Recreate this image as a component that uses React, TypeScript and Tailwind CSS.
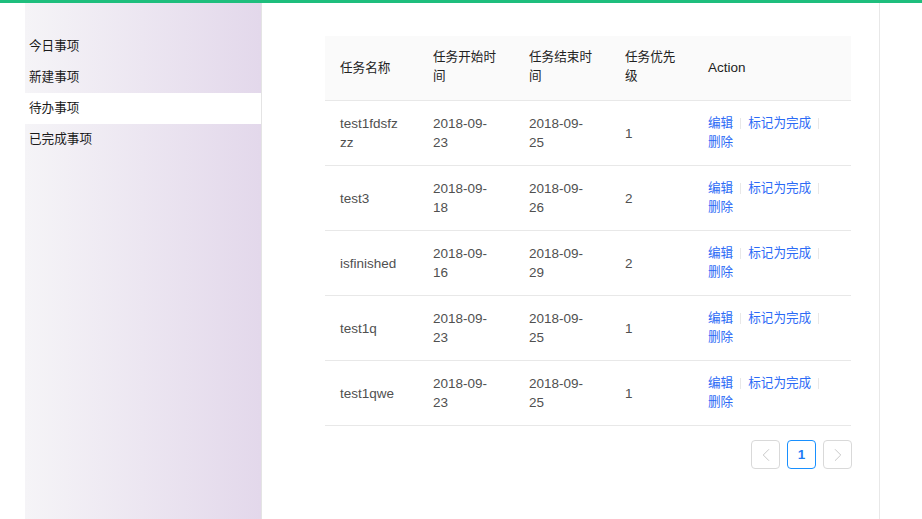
import React from 'react'
import { ChevronLeft, ChevronRight } from 'lucide-react'

const tasks = [
  { name: 'test1fdsfzzz', start: '2018-09-23', end: '2018-09-25', priority: 1 },
  { name: 'test3', start: '2018-09-18', end: '2018-09-26', priority: 2 },
  { name: 'isfinished', start: '2018-09-16', end: '2018-09-29', priority: 2 },
  { name: 'test1q', start: '2018-09-23', end: '2018-09-25', priority: 1 },
  { name: 'test1qwe', start: '2018-09-23', end: '2018-09-25', priority: 1 },
]

const menu = ['今日事项', '新建事项', '待办事项', '已完成事项']

function Divider() {
  return <span className="mx-[7px] inline-block h-[11px] w-px bg-[#e8e8e8] align-middle" />
}

export default function App() {
  return (
    <div className="min-h-screen bg-white font-['Liberation_Sans','Noto_Sans_CJK_SC',sans-serif] text-[13.5px] leading-[19px]">
      <div className="h-[3px] bg-[#1ebe7d]" />
      <div className="flex h-[516px]">
        {/* Sidebar */}
        <aside className="ml-[25px] w-[237px] border-r border-[#e4e4e4] bg-gradient-to-r from-[#f5f4f7] to-[#e3d8eb] pt-[28px]">
          {menu.map((item, i) => (
            <div
              key={item}
              className={`flex h-[31px] items-center pl-[4px] text-[12.6px] text-[#1a1a1a] ${i === 2 ? 'bg-white' : ''}`}
            >
              {item}
            </div>
          ))}
        </aside>

        {/* Main content */}
        <main className="w-[618px] border-r border-[#e8e8e8] pl-[63px] pr-[28px] pt-[33px]">
          <table className="w-full table-fixed border-collapse text-left">
            <colgroup>
              <col className="w-[93px]" />
              <col className="w-[96px]" />
              <col className="w-[96px]" />
              <col className="w-[83px]" />
              <col />
            </colgroup>
            <thead>
              <tr className="border-b border-[#e8e8e8] bg-[#fafafa] text-[#222]">
                <th className="h-[64px] px-[15px] py-[13px] text-[12.6px] font-normal">任务名称</th>
                <th className="px-[15px] pb-[14px] pt-[12px] text-[12.6px] font-normal">任务开始时间</th>
                <th className="px-[15px] pb-[14px] pt-[12px] text-[12.6px] font-normal">任务结束时间</th>
                <th className="px-[15px] pb-[14px] pt-[12px] text-[12.6px] font-normal">任务优先级</th>
                <th className="px-[15px] pb-[14px] pt-[12px] font-normal">Action</th>
              </tr>
            </thead>
            <tbody className="text-[#505050]">
              {tasks.map((t) => (
                <tr key={t.name} className="border-b border-[#e8e8e8]">
                  <td className="h-[64px] px-[15px] py-[13px] break-all">{t.name}</td>
                  <td className="px-[15px] py-[13px]">{t.start}</td>
                  <td className="px-[15px] py-[13px]">{t.end}</td>
                  <td className="px-[15px] py-[13px]">{t.priority}</td>
                  <td className="px-[15px] py-[13px] text-[12.6px] text-[#2b6af6]">
                    <a className="cursor-pointer">编辑</a>
                    <Divider />
                    <a className="cursor-pointer">标记为完成</a>
                    <Divider />
                    <a className="cursor-pointer">删除</a>
                  </td>
                </tr>
              ))}
            </tbody>
          </table>

          {/* Pagination */}
          <div className="-mr-px mt-[14px] flex justify-end gap-[7px]">
            <button className="flex h-[29px] w-[29px] items-center justify-center rounded-[4px] border border-[#d9d9d9] text-[#c4c4c4]">
              <ChevronLeft size={22} strokeWidth={1} />
            </button>
            <button className="flex h-[29px] w-[29px] items-center justify-center rounded-[4px] border border-[#1890ff] font-bold text-[#1f7cf5]">
              1
            </button>
            <button className="flex h-[29px] w-[29px] items-center justify-center rounded-[4px] border border-[#d9d9d9] text-[#c4c4c4]">
              <ChevronRight size={22} strokeWidth={1} />
            </button>
          </div>
        </main>
      </div>
    </div>
  )
}
